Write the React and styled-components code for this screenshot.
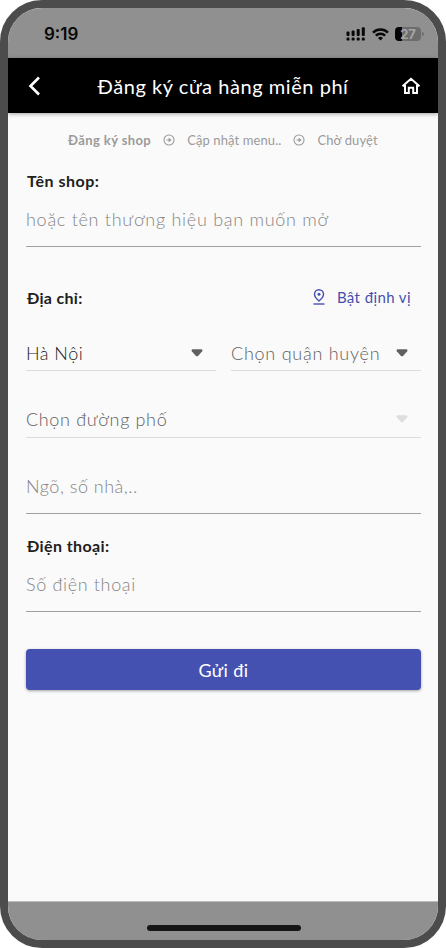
import { useState } from 'react';
import styled, { createGlobalStyle } from 'styled-components';

const GlobalStyle = createGlobalStyle`
  * {
    box-sizing: border-box;
  }

  body {
    margin: 0;
    background: #fff;
    font-family: Lato, 'Noto Sans', sans-serif;
  }
`;

const Phone = styled.div`
  display: flex;
  flex-direction: column;
  width: 446px;
  height: 948px;
  border: 8px solid #4c4c4c;
  border-radius: 42px;
  background: #fafafa;
  overflow: hidden;
`;

const StatusBar = styled.div`
  display: flex;
  align-items: center;
  justify-content: space-between;
  flex: none;
  height: 50px;
  padding: 2px 15px 0 36px;
  background: #909090;
`;

const Time = styled.span`
  font: 600 17px Inter, sans-serif;
  letter-spacing: 0;
  color: #080808;
`;

const StatusIcons = styled.div`
  display: flex;
  align-items: center;
  gap: 6px;
`;

const Battery = styled.span`
  position: relative;
  display: flex;
  align-items: center;
  justify-content: center;
  width: 26px;
  height: 14px;
  margin-right: 2px;
  border-radius: 4px;
  background: linear-gradient(90deg, #050505 27%, #6d6d6d 27%);
  color: #a5a5a5;
  font: 700 13px Inter, sans-serif;

  &::after {
    content: '';
    position: absolute;
    right: -3px;
    top: 5px;
    width: 2px;
    height: 4px;
    border-radius: 0 2px 2px 0;
    background: #6d6d6d;
  }
`;

const Header = styled.header`
  display: flex;
  align-items: center;
  justify-content: space-between;
  flex: none;
  height: 55px;
  padding: 0 17px 0 20px;
  background: #000;
  box-shadow: 0 1px 4px rgba(0, 0, 0, 0.35);
`;

const Title = styled.h1`
  margin: 0 0 0 3px;
  font-size: 20px;
  font-weight: 400;
  line-height: 28px;
  letter-spacing: ${({ $spacing }) => $spacing}px;
  white-space: nowrap;
  color: #fff;
`;

const IconButton = styled.button`
  display: flex;
  padding: 0;
  border: 0;
  background: none;
  color: #fff;
`;

const Form = styled.form`
  display: flex;
  flex: 1;
  flex-direction: column;
  padding: 0 17px 0 18px;
`;

const Steps = styled.div`
  display: flex;
  align-items: center;
  flex: none;
  height: 53px;
  padding-left: 42px;
  color: #9b9b9b;

  svg {
    flex: none;
    margin: 0 12px;
  }
`;

const Step = styled.span`
  font-size: 13px;
  font-weight: ${({ $active }) => ($active ? 700 : 400)};
  letter-spacing: ${({ $spacing }) => $spacing}px;
  white-space: nowrap;
`;

const LabelRow = styled.div`
  display: flex;
  align-items: center;
  justify-content: space-between;
  flex: none;
  height: ${({ $height }) => $height || 30}px;
  padding: ${({ $top }) => $top || 0}px 10px 2px 0;
`;

const Label = styled.label`
  padding-left: 1px;
  font-size: 16px;
  font-weight: 700;
  letter-spacing: ${({ $spacing }) => $spacing}px;
  color: #202020;
`;

const LocateButton = styled.button`
  display: flex;
  align-items: center;
  gap: 12px;
  padding: 0;
  border: 0;
  background: none;
  color: #4550ae;
  font: inherit;
  font-size: 15px;
  letter-spacing: ${({ $spacing }) => $spacing}px;
`;

const Input = styled.input`
  flex: none;
  width: 100%;
  height: ${({ $height }) => $height || 51}px;
  padding: ${({ $top }) => $top || 0}px 0 5px;
  border: 0;
  border-bottom: 1px solid #a0a0a0;
  border-radius: 0;
  outline: 0;
  background: none;
  color: #333;
  font: 300 18px Lato, 'Noto Sans', sans-serif;
  letter-spacing: ${({ $spacing }) => $spacing}px;

  &::placeholder {
    color: #858585;
    opacity: 1;
  }
`;

const SelectRow = styled.div`
  display: grid;
  grid-template-columns: ${({ $columns }) => $columns || '1fr'};
  gap: 15px;
  flex: none;
  height: ${({ $height }) => $height}px;
`;

const SelectBox = styled.div`
  display: flex;
  align-items: center;
  justify-content: space-between;
  padding: ${({ $top }) => $top || 0}px 13px 0 0;
  border-bottom: 1px solid #dcdcdc;
  color: ${({ $filled }) => ($filled ? '#222' : '#606060')};
  font-size: 18px;
  font-weight: 300;
  letter-spacing: ${({ $spacing }) => $spacing}px;
  white-space: nowrap;
`;

const Submit = styled.button`
  flex: none;
  height: 41px;
  margin-top: 37px;
  border: 0;
  border-radius: 4px;
  background: #4451b1;
  box-shadow: 0 1px 3px rgba(0, 0, 0, 0.35);
  color: #fff;
  font: inherit;
  font-size: 18px;
  letter-spacing: ${({ $spacing }) => $spacing}px;
`;

const HomeArea = styled.div`
  display: flex;
  justify-content: center;
  flex: none;
  height: 39px;
  padding: 23px 0 0 1px;
  border-top: 1px solid #bcbcbc;
  background: #909090;
`;

const HomeBar = styled.div`
  width: 154px;
  height: 6px;
  border-radius: 3px;
  background: #151515;
`;

const SignalIcon = () => (
  <svg width="20" height="14" viewBox="0 0 20 14" fill="#080808">
    <rect x="0.5" y="4.5" width="3" height="4.5" rx="1" />
    <rect x="5.6" y="3.5" width="3" height="5.5" rx="1" />
    <rect x="10.7" y="2" width="3" height="7" rx="1" />
    <rect x="15.8" y="0.3" width="3" height="8.7" rx="1" />
    <rect x="0.5" y="10.6" width="3" height="3" rx="1.2" />
    <rect x="5.6" y="10.6" width="3" height="3" rx="1.2" />
    <rect x="10.7" y="10.6" width="3" height="3" rx="1.2" />
    <rect x="15.8" y="10.6" width="3" height="3" rx="1.2" />
  </svg>
);

const WifiIcon = () => (
  <svg width="17" height="13" viewBox="0 0 17 13" fill="none" stroke="#080808" strokeWidth="2.4">
    <path d="M1 4.6a10.8 10.8 0 0 1 15 0" />
    <path d="M3.8 7.6a6.8 6.8 0 0 1 9.4 0" />
    <path d="M8.5 12.4 6 9.9a3.6 3.6 0 0 1 5 0Z" fill="#080808" stroke="none" />
  </svg>
);

const BackIcon = () => (
  <svg width="14" height="20" viewBox="0 0 14 20" fill="none" stroke="currentColor" strokeWidth="2.6">
    <path d="M11 1.5 2.5 10l8.5 8.5" />
  </svg>
);

const HomeIcon = () => (
  <svg width="20" height="18" viewBox="0 0 20 18" fill="none" stroke="currentColor" strokeWidth="2">
    <path d="M1.5 9.3 10 1.8l8.5 7.5M4 8v8h3.8v-5.3h4.4V16H16V8" />
  </svg>
);

const StepArrow = () => (
  <svg width="12" height="12" viewBox="0 0 12 12" fill="none" stroke="currentColor" strokeWidth="1.1">
    <circle cx="6" cy="6" r="5" />
    <path d="M3.5 6h4" />
    <path d="M5.6 3.6 8.6 6l-3 2.4Z" fill="currentColor" stroke="none" />
  </svg>
);

const PinIcon = () => (
  <svg width="12" height="16" viewBox="0 0 12 16" fill="none" stroke="currentColor" strokeWidth="1.4">
    <path d="M6 12C3.2 9.6 1.5 7.3 1.5 5.2a4.5 4.5 0 0 1 9 0C10.5 7.3 8.8 9.6 6 12Z" />
    <circle cx="6" cy="5.3" r="1.5" fill="currentColor" stroke="none" />
    <path d="M0.5 15h11" />
  </svg>
);

const Caret = ({ disabled }) => (
  <svg width="12" height="8" viewBox="0 0 12 8" fill={disabled ? '#dedede' : '#606060'}>
    <path d="M1.6 0.3h8.8q1.7 0.4 0.8 2L7.3 6.7Q6 8 4.700 6.7L0.8 2.300Q-0.100 0.700 1.600 0.300Z" />
  </svg>
);

const App = () => {
  const [form, setForm] = useState({ name: '', address: '', phone: '' });

  const handleChange = (e) => {
    setForm({ ...form, [e.target.name]: e.target.value });
  };

  return (
    <>
      <GlobalStyle />
      <Phone>
        <StatusBar>
          <Time>9:19</Time>
          <StatusIcons>
            <SignalIcon />
            <WifiIcon />
            <Battery>27</Battery>
          </StatusIcons>
        </StatusBar>
        <Header>
          <IconButton type="button"><BackIcon /></IconButton>
          <Title $spacing={0.55}>Đăng ký cửa hàng miễn phí</Title>
          <IconButton type="button"><HomeIcon /></IconButton>
        </Header>
        <Form onSubmit={(e) => e.preventDefault()}>
          <Steps>
            <Step $active $spacing={0.4}>Đăng ký shop</Step>
            <StepArrow />
            <Step $spacing={0.1}>Cập nhật menu..</Step>
            <StepArrow />
            <Step $spacing={0.1}>Chờ duyệt</Step>
          </Steps>
          <LabelRow>
            <Label $spacing={0.5}>Tên shop:</Label>
          </LabelRow>
          <Input
            name="name"
            value={form.name}
            onChange={handleChange}
            placeholder="hoặc tên thương hiệu bạn muốn mở"
            $spacing={0.72}
          />
          <LabelRow $height={89} $top={13}>
            <Label $spacing={0.3}>Địa chỉ:</Label>
            <LocateButton type="button" $spacing={0.4}>
              <PinIcon />
              Bật định vị
            </LocateButton>
          </LabelRow>
          <SelectRow $height={35} $columns="190px 190px">
            <SelectBox $filled $spacing={0.5}>Hà Nội<Caret /></SelectBox>
            <SelectBox $spacing={0.75}>Chọn quận huyện<Caret /></SelectBox>
          </SelectRow>
          <SelectRow $height={67}>
            <SelectBox $top={30} $spacing={0.65}>Chọn đường phố<Caret disabled /></SelectBox>
          </SelectRow>
          <Input
            name="address"
            value={form.address}
            onChange={handleChange}
            placeholder="Ngõ, số nhà,.."
            $height={76}
            $top={26}
            $spacing={0.5}
          />
          <LabelRow $height={47} $top={18}>
            <Label $spacing={0.4}>Điện thoại:</Label>
          </LabelRow>
          <Input
            name="phone"
            value={form.phone}
            onChange={handleChange}
            placeholder="Số điện thoại"
            $spacing={0.65}
          />
          <Submit type="submit" $spacing={0.4}>Gửi đi</Submit>
        </Form>
        <HomeArea>
          <HomeBar />
        </HomeArea>
      </Phone>
    </>
  );
};

export default App;
